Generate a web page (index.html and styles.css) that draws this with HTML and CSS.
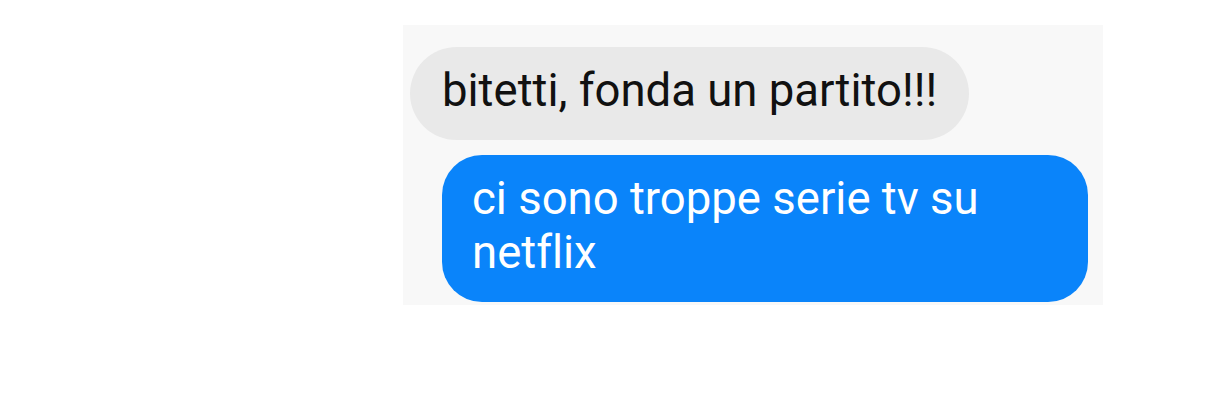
FILE: index.html
```html
<!DOCTYPE html>
<html lang="it">
<head>
    <meta charset="UTF-8">
    <title>Chat</title>

    <link rel="stylesheet" href="styles.css">
</head>
<body>
    <div class="thread">
        <div class="msg msg-in">bitetti, fonda un partito!!!</div>
        <div class="msg msg-out">ci sono troppe serie tv su netflix</div>
    </div>
</body>
</html>
```

FILE: styles.css
```css
body {
    margin: 0;
    background-color: #ffffff;
    font-family: Roboto, "Noto Sans", sans-serif;
}

.thread {
    width: 700px;
    height: 280px;
    margin: 25px 0 0 403px;
    padding: 22px 15px 0 7px;
    box-sizing: border-box;
    background-color: #f8f8f8;
    display: flex;
    flex-direction: column;
    align-items: flex-start;
    gap: 15px;
}

.msg {
    font-size: 45.5px;
    line-height: 54px;
    font-variant-ligatures: none;
    box-sizing: border-box;
}

.msg-in {
    height: 93px;
    padding: 17px 32px 0 32px;
    border-radius: 47px;
    background-color: #e9e9e9;
    color: #111111;
}

.msg-out {
    align-self: flex-end;
    width: 646px;
    height: 147px;
    padding: 17px 30px 0 30px;
    border-radius: 40px;
    background-color: #0a84fa;
    color: #ffffff;
}
```
